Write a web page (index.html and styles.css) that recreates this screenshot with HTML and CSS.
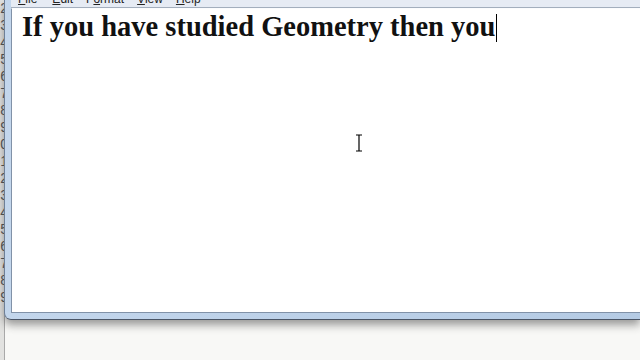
FILE: index.html
```html
<!DOCTYPE html>
<html lang="en">
<head>
    <meta charset="UTF-8">
    <title>Untitled - Notepad</title>
    <link rel="stylesheet" href="styles.css">
</head>
<body>

    <div class="desktop">
        <div class="gutter">
            <span>2</span><span>3</span><span>4</span><span>5</span><span>6</span>
            <span>7</span><span>8</span><span>9</span><span>0</span><span>1</span>
            <span>2</span><span>3</span><span>4</span><span>5</span><span>6</span>
            <span>7</span><span>8</span><span>9</span>
        </div>

        <div class="window">
            <div class="menubar">
                <span><u>F</u>ile</span>
                <span><u>E</u>dit</span>
                <span>F<u>o</u>rmat</span>
                <span><u>V</u>iew</span>
                <span><u>H</u>elp</span>
            </div>
            <div class="editor">
                <p class="line">If you have studied Geometry then you<span class="caret"></span></p>
            </div>
        </div>
    </div>

    <svg class="ibeam" width="10" height="18" viewBox="0 0 10 18">
        <path d="M2 1h6M5 1v16M2 17h6" stroke="#000" stroke-width="1.2" fill="none"/>
    </svg>

</body>
</html>
```

FILE: styles.css
```css
body {
    margin: 0;
    width: 640px;
    height: 360px;
    overflow: hidden;
    background: #f8f8f6;
    font-family: "Liberation Sans", Arial, sans-serif;
    position: relative;
}

.desktop {
    display: flex;
    align-items: flex-start;
}

.gutter {
    width: 4px;
    height: 360px;
    background: #e2e2e0;
    border-right: 1px solid #a9a9a9;
    display: flex;
    flex-direction: column;
    align-items: flex-end;
    overflow: hidden;
    font-size: 14px;
    line-height: 17px;
    color: #555;
}

.gutter span {
    margin-right: -4px;
}

.window {
    flex: 1;
    height: 313px;
    display: flex;
    flex-direction: column;
    background: linear-gradient(90deg, #c3d6ec, #b5cbe4);
    border-left: 1px solid #6d7f97;
    border-bottom: 1px solid #4a5566;
    border-bottom-left-radius: 7px;
    padding: 0 0 6px 6px;
    box-shadow: 0 5px 9px rgba(40, 40, 40, 0.45);
    margin-left: -1px;
}

.menubar {
    height: 7px;
    overflow: hidden;
    background: #e6ebf4;
    border-bottom: 1px solid #a3aebd;
    display: flex;
    gap: 13px;
    padding-left: 7px;
    font-size: 12px;
    line-height: 14px;
    color: #222;
}

.menubar span {
    margin-top: -8px;
}

.menubar span:nth-child(2) { margin-left: 2px; }

.editor {
    flex: 1;
    background: #fff;
    border-top: 1px solid #fbfcfe;
    border-left: 1px solid #8192a8;
    border-bottom: 1px solid #8192a8;
}

.line {
    margin: 0;
    padding: 2px 0 0 10px;
    font-family: "Liberation Serif", "Times New Roman", serif;
    font-weight: bold;
    font-size: 28.5px;
    line-height: 32px;
    color: #111;
}

.caret {
    display: inline-block;
    width: 1px;
    height: 28px;
    background: #000;
    vertical-align: -6px;
    margin-left: 1px;
}

/* mouse pointer over the text area */
.ibeam {
    position: absolute;
    left: 354px;
    top: 134px;
}
```
